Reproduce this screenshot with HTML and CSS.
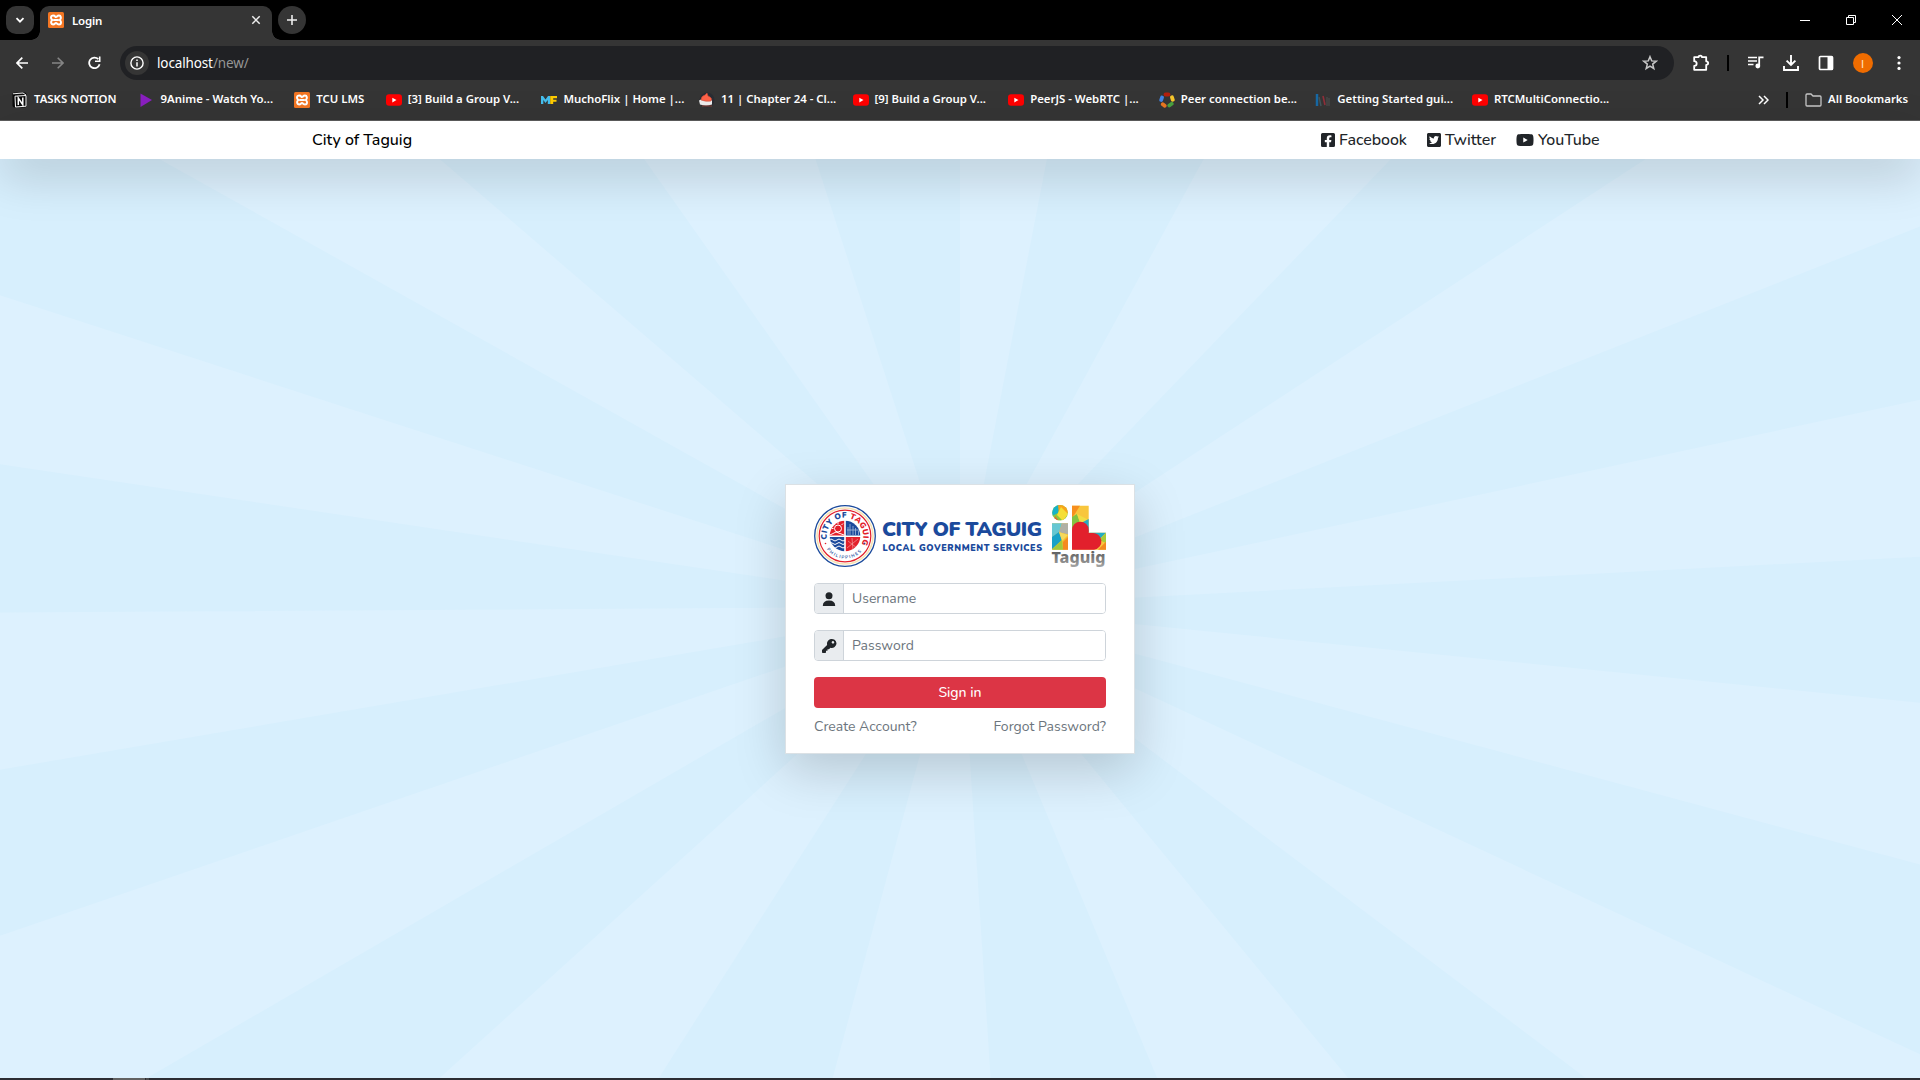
FILE: index.html
```
<!DOCTYPE html>
<html lang="en">
<head>
<meta charset="utf-8">
<title>Login</title>
<link rel="stylesheet" href="styles.css">
</head>
<body>
<svg class="defs" width="0" height="0" aria-hidden="true">
  <symbol id="xampp" viewBox="0 0 16 16"><rect width="16" height="16" rx="1.5" fill="#f37623"/><path d="M4.300 8C2.300 6.500 2.500 3.600 5 3.600S7 5 8 5s1-1.400 3-1.400 2.700 2.900.7 4.400c2 1.500 1.800 4.400-.7 4.400S9 11 8 11s-1 1.400-3 1.400S2.300 9.500 4.300 8ZM5.500 8h5" fill="none" stroke="#fff" stroke-width="2"/></symbol>
  <symbol id="yt" viewBox="0 0 16 16"><rect y="2.300" width="16" height="11.500" rx="3" fill="#f00"/><path d="M6.300 5.700v4.700L10.500 8Z" fill="#fff"/></symbol>
</svg>
<div class="browser">
  <header class="tabs">
    <button class="tab-search"><svg width="10" height="10" viewBox="0 0 10 10"><path d="m1.500 3.200 3.500 3.500 3.500-3.500" fill="none" stroke="#fff" stroke-width="1.800"/></svg></button>
    <div class="tab"><svg width="16" height="16"><use href="#xampp"/></svg><span class="tab-title">Login</span><svg width="10" height="10" viewBox="0 0 10 10"><path d="m1.300 1.300 7.400 7.400m0-7.400-7.400 7.400" stroke="#eee" stroke-width="1.500"/></svg></div>
    <button class="new-tab"><svg width="12" height="12" viewBox="0 0 12 12"><path d="M6 1v10M1 6h10" stroke="#eee" stroke-width="1.600"/></svg></button>
    <div class="window-controls">
      <svg width="10" height="10"><path d="M0 5.500h10" stroke="#fff"/></svg>
      <svg width="10" height="10"><path d="M.5 2.500h7v7h-7ZM2.500 2.500v-2h7v7h-2" fill="none" stroke="#fff"/></svg>
      <svg width="10" height="10"><path d="m0 0 10 10M10 0 0 10" stroke="#fff"/></svg>
    </div>
  </header>

  <div class="toolbar">
    <div class="nav-buttons">
      <svg width="12" height="12" viewBox="0 0 12 12"><path d="M12 6H1.200M6.300.7 1 6l5.300 5.300" fill="none" stroke="#fff" stroke-width="1.700"/></svg>
      <svg width="12" height="12" viewBox="0 0 12 12"><path d="M0 6h10.800M5.700.7 11 6l-5.300 5.300" fill="none" stroke="#858585" stroke-width="1.600"/></svg>
      <svg width="14" height="14" viewBox="0 0 14 14"><path d="M10.300 3.200A5.300 5.300 0 1 0 11.600 8.300" fill="none" stroke="#fff" stroke-width="1.800"/><path d="M12.500.6V6H7V4.400h3.900V.6Z" fill="#fff"/></svg>
    </div>
    <div class="omnibox">
      <span class="site-info"><svg width="14" height="14" viewBox="0 0 14 14"><circle cx="7" cy="7" r="6.100" fill="none" stroke="#fff" stroke-width="1.400"/><path d="M7 6.200v4.200M7 3.500v1.500" stroke="#fff" stroke-width="1.500"/></svg></span>
      <span class="url">localhost<span class="path">/new/</span></span>
      <svg class="star" width="16" height="16" viewBox="0 0 16 16"><path d="m8 1.700 1.700 4.200 4.500.3-3.500 2.900 1.100 4.400L8 11.100l-3.800 2.400 1.100-4.400L1.800 6.200l4.500-.3Z" fill="none" stroke="#c7c7c7" stroke-width="1.500"/></svg>
    </div>
    <div class="actions">
      <svg width="18" height="18" viewBox="0 0 18 18"><path d="M2.200 3.200H6.500C6.500 1 10 1 10 3.200H14.200V7.300C16.800 7.300 16.800 10.900 14.200 10.900V15.800H2.200V12C5.500 12 5.500 7.200 2.200 7.200Z" fill="none" stroke="#fff" stroke-width="1.800" stroke-linejoin="round"/></svg>
      <i class="rule"></i>
      <svg width="18" height="18" viewBox="0 0 18 18"><path d="M1 3.500h9M1 7h9M1 10.500h5.500" stroke="#fff" stroke-width="1.700"/><path d="M12.200 12.500V3.300H16.500" fill="none" stroke="#fff" stroke-width="1.800"/><circle cx="10.800" cy="12" r="2.400" fill="#fff"/></svg>
      <svg width="18" height="18" viewBox="0 0 18 18"><path d="M9 1v9M4.600 6.600 9 11l4.400-4.400M2 12v4h14v-4" fill="none" stroke="#fff" stroke-width="1.900"/></svg>
      <svg width="18" height="18" viewBox="0 0 18 18"><rect x="2.500" y="2.500" width="13" height="13" rx="1" fill="none" stroke="#fff" stroke-width="1.700"/><path d="M10.500 2.500h5v13h-5Z" fill="#fff"/></svg>
      <span class="avatar">I</span>
      <svg width="18" height="18" viewBox="0 0 18 18" fill="#fff"><circle cx="9" cy="3.600" r="1.600"/><circle cx="9" cy="9" r="1.600"/><circle cx="9" cy="14.400" r="1.600"/></svg>
    </div>
  </div>

  <nav class="bookmarks">
    <a class="bm w83"><svg width="16" height="16" viewBox="0 0 16 16"><rect x=".5" y=".5" width="14" height="15" rx="2" fill="#0a0a0a"/><path d="m1 1.800 10-.8 3 2" fill="none" stroke="#eee"/><path d="M3 4.200 14 3.500v10.700L3.500 15Z" fill="none" stroke="#fff"/><path d="M6.300 13V6l4.500 6.700V5.500" fill="none" stroke="#fff" stroke-width="1.500"/></svg><span>TASKS NOTION</span></a>
    <a class="bm w113"><svg width="16" height="16"><path d="M1.500 1.500 13 8 1.500 15Z" fill="#8a1fc0"/></svg><span>9Anime - Watch Yo...</span></a>
    <a class="bm w49"><svg width="16" height="16"><use href="#xampp"/></svg><span>TCU LMS</span></a>
    <a class="bm w113"><svg width="16" height="16"><use href="#yt"/></svg><span>[3] Build a Group V...</span></a>
    <a class="bm w115"><svg width="16" height="16" viewBox="0 0 16 16"><path d="M0 12V4h2l2.500 3.500L7 4h2v8H6.800V8L4.500 11 2.300 8v4Z" fill="#45bfee"/><path d="M9.200 12V4H16v2.300h-3.800v1.400h3.300v2.100h-3.300V12Z" fill="#fc0"/></svg><span>MuchoFlix | Home |...</span></a>
    <a class="bm w111"><svg width="16" height="16" viewBox="0 0 16 16"><circle cx="8" cy="8" r="7.500" fill="#2a2d34"/><path d="M0 8.500q6-4 13 0v4q-6 2-12 0Z" fill="#eee"/><path d="M2 8q0-4 4-5l2-2 1 3q5 2 3 5-5 1-10-1M3 14h10" fill="#ff6248" stroke="#c84b37" stroke-width=".6"/></svg><span>11 | Chapter 24 - Cl...</span></a>
    <a class="bm w113"><svg width="16" height="16"><use href="#yt"/></svg><span>[9] Build a Group V...</span></a>
    <a class="bm w108"><svg width="16" height="16"><use href="#yt"/></svg><span>PeerJS - WebRTC |...</span></a>
    <a class="bm w114"><svg width="16" height="16" viewBox="0 0 16 16" fill="none" stroke-width="3.800" stroke-linecap="round"><path d="m2.200 8 .8-2.500" stroke="#4285e8"/><path d="m13 5.300.8 2.500" stroke="#f7c62c"/><path d="m12.700 11.800-2.400 1.700" stroke="#4aa13f"/><path d="M5.700 13.800 3.800 12.300" stroke="#e87722"/><path d="M6.500 2.500h3" stroke="#b4200e"/></svg><span>Peer connection be...</span></a>
    <a class="bm w114"><svg width="16" height="16" viewBox="0 0 16 16"><path d="M2 2v12" stroke="#1769a5" stroke-width="2.500"/><path d="m4 5 2 9" stroke="#42555a" stroke-width="1.500"/><path d="m8 4 2 9" stroke="#922f3a" stroke-width="1.600"/><path d="M12 5v9m2-8v8" stroke="#535353"/></svg><span>Getting Started gui...</span></a>
    <a class="bm w114"><svg width="16" height="16"><use href="#yt"/></svg><span>RTCMultiConnectio...</span></a>
    <div class="bm-end">
      <svg width="11" height="10" viewBox="0 0 11 10"><path d="m1 1 4 4-4 4m5-8 4 4-4 4" fill="none" stroke="#fff" stroke-width="1.500"/></svg>
      <i class="rule"></i>
      <a class="bm w78"><svg width="17" height="16" viewBox="0 0 17 16"><path d="M1 3q0-1 1-1h4l2 2h7q1 0 1 1v8q0 1-1 1H2q-1 0-1-1Z" fill="none" stroke="#c7c7c7" stroke-width="1.300"/></svg><span>All Bookmarks</span></a>
    </div>
  </nav>
</div>

<nav class="site-nav">
  <a class="brand">City of Taguig</a>
  <div class="social">
    <a><svg width="14" height="16" viewBox="0 0 448 512"><path fill="currentColor" d="M400 32H48A48 48 0 0 0 0 80v352a48 48 0 0 0 48 48h137.250V327.690h-63V256h63v-54.640c0-62.150 37-96.480 93.670-96.480 27.140 0 55.520 4.840 55.520 4.840v61h-31.270c-30.810 0-40.420 19.120-40.420 38.730V256h68.780l-11 71.690h-57.780V480H400a48 48 0 0 0 48-48V80a48 48 0 0 0-48-48z"/></svg><span class="fb">Facebook</span></a>
    <a><svg width="14" height="16" viewBox="0 0 448 512"><path fill="currentColor" d="M400 32H48C21.500 32 0 53.500 0 80v352c0 26.500 21.500 48 48 48h352c26.500 0 48-21.500 48-48V80c0-26.500-21.500-48-48-48zm-48.900 158.800c.2 2.800.2 5.700.2 8.500 0 86.700-66 186.600-186.600 186.600-37.200 0-71.700-10.800-100.700-29.400 5.300.6 10.400.8 15.800.8 30.700 0 58.900-10.400 81.400-28-28.800-.6-53-19.500-61.300-45.500 10.100 1.500 19.200 1.500 29.600-1.200-30-6.100-52.500-32.500-52.500-64.400v-.8c8.700 4.900 18.900 7.900 29.600 8.300a65.447 65.447 0 0 1-29.200-54.600c0-12.200 3.200-23.400 8.900-33.100 32.300 39.800 80.800 65.800 135.200 68.600-9.300-44.500 24-80.600 64-80.600 18.900 0 35.900 7.900 47.900 20.700 14.800-2.800 29-8.300 41.600-15.800-4.900 15.200-15.200 28-28.800 36.100 13.200-1.400 26-5.100 37.800-10.200-8.900 13.100-20.100 24.700-32.900 34z"/></svg><span class="tw">Twitter</span></a>
    <a><svg width="18" height="16" viewBox="0 0 576 512"><path fill="currentColor" d="M549.655 124.083c-6.281-23.650-24.787-42.276-48.284-48.597C458.781 64 288 64 288 64S117.220 64 74.629 75.486c-23.497 6.322-42.003 24.947-48.284 48.597-11.412 42.867-11.412 132.305-11.412 132.305s0 89.438 11.412 132.305c6.281 23.650 24.787 41.500 48.284 47.821C117.220 448 288 448 288 448s170.780 0 213.371-11.486c23.497-6.321 42.003-24.171 48.284-47.821 11.412-42.867 11.412-132.305 11.412-132.305s0-89.438-11.412-132.305zm-317.510 213.508V175.185l142.739 81.205-142.739 81.201z"/></svg><span class="ytb">YouTube</span></a>
  </div>
</nav>

<main class="stage">
  <svg class="rays" viewBox="0 15 1568 1550" preserveAspectRatio="none" aria-hidden="true">
    <g fill="#ddf1fe">
      <path d="M784 770 130 15H359ZM784 770 526 15H666ZM784 770V15H855ZM784 770 983 15H1136Z"/>
      <path d="M784 770 1344 15H1568V129ZM784 770 1568 421V686ZM784 770 1568 932V1205ZM784 770 1568 1525V1565H1295Z"/>
      <path d="M784 770 1101 1565H945ZM784 770 809 1565H680ZM784 770 538 1565H359ZM784 770 120 1565H0V1325Z"/>
      <path d="M784 770 0 1045V780ZM784 770 0 530V245Z"/>
    </g>
  </svg>
  <form class="card">
    <svg class="logo" width="292" height="62" viewBox="0 0 292 62" role="img">
      <defs>
        <path id="arc-top" d="M14.600 39.200A18.300 18.300 0 1 1 47.400 39.200"/>
        <path id="arc-bottom" d="M9.900 39A22.500 22.500 0 0 0 52.100 39"/>
        <clipPath id="core"><circle cx="31" cy="31" r="15.300"/></clipPath>
        <clipPath id="dot"><circle cx="246" cy="7.800" r="7.800"/></clipPath>
        <linearGradient id="steel" x2="0" y2="1"><stop stop-color="#444"/><stop offset="1" stop-color="#aaa"/></linearGradient>
      </defs>
      <g fill="none"><circle cx="31" cy="31" r="30.300" fill="#fff" stroke="#1b4a9c" stroke-width="1.300"/><circle cx="31" cy="31" r="28" stroke="#f6e3b4" stroke-width="1.600"/><circle cx="31" cy="31" r="25.800" stroke="#e3202b" stroke-width="1.200"/></g>
      <text class="seal-top"><textPath href="#arc-top" startOffset="5"><tspan fill="#1b4a9c">CITY OF </tspan><tspan fill="#e3202b">TAGUIG</tspan></textPath></text>
      <text class="seal-bottom" fill="#3c65a9"><textPath href="#arc-bottom" startOffset="6">PHILIPPINES</textPath></text>
      <circle cx="11.500" cy="38.500" r=".8" fill="#e3202b"/><circle cx="50.500" cy="38.500" r=".8" fill="#1b4a9c"/>
      <g clip-path="url(#core)">
        <path d="M15 15h15.200v15.500H15ZM31.800 32H47v15H31.800Z" fill="#e3202b"/>
        <path d="M31.800 15H47v15.500H31.800ZM15 32h15.200v15H15Z" fill="#1b4a9c"/>
        <circle cx="24" cy="23.500" r="3.500" fill="none" stroke="#fff"/><path d="M24 17v2m-6.500 4.500h2m-.5-5 1.500 1.500m8.500-1.500-1.500 1.500M16 30l6-3 8 3" stroke="#fff" fill="none"/>
        <path d="M34 30v-8m2 8V19m3 11V21m2.500 9v-7m3 7v-4M33 25h13" stroke="#b8c8e3" stroke-width=".7"/>
        <path d="M15 35q2-2 4 0t4 0 4 0 4 0M15 38.500q2-2 4 0t4 0 4 0 4 0M15 42q2-2 4 0t4 0 4 0 4 0" fill="none" stroke="#fff"/>
        <path d="m33 43 11-9m-10 2 9 7m-5-10 1 12" stroke="#f49b9e" stroke-width=".7"/>
      </g>
      <text class="logo-title" x="68" y="31.300" textLength="160">CITY OF TAGUIG</text>
      <text class="logo-sub" x="68.500" y="46" textLength="159.500">LOCAL GOVERNMENT SERVICES</text>
      <g clip-path="url(#dot)"><path d="M238 0h16v16h-16Z" fill="#8dc63f"/><path d="m238 0 9 0-3 8-6 3Z" fill="#16b3c6"/><path d="M244 0h10v8l-9 2Z" fill="#f8a51b"/><path d="m247 2 7 7-5 7-6-6Z" fill="#f5de35"/><path d="m241 11 4 5h-5Z" fill="#e5662c"/></g>
      <path d="M238 18.300h16v26.400h-16Z" fill="#f5bd2c"/><path d="M238 18.300h10l-3 9-7 5Z" fill="#65c7d2"/><path d="m248 18.300 6 0v11l-9-2Z" fill="#b0b0a5"/><path d="m238 32 7-5 3 8-10 9Z" fill="#18a1c7"/><path d="m245 27 9 3-6 6Z" fill="#f5d85b"/><path d="m238 44.700 10-10 1 10Z" fill="#a4c83c"/><path d="m249 37 5-5v12.700h-5Z" fill="#f58a20"/>
      <path d="M258 .7h16.700v27H292v17h-34Z" fill="#f8c63d"/><path d="M258 .7h8l-5 8-3 4Z" fill="#f78f1e"/><path d="m258 12 5-3 3 9-8 7Z" fill="#83c341"/><path d="m263 9 11.700 6-8 4Z" fill="#f1dd45"/><path d="m267 18 7.700-4v13.700Z" fill="#28aac3"/><path d="m275 27.700 17 0-7 7Z" fill="#25adc1"/><path d="m285 35 7-7v10Z" fill="#a9cb38"/><path d="m284 44.700 8-8v8Z" fill="#f28a20"/>
      <path d="M258 44.700V25a8.300 8.300 0 0 1 16.700 0v3H278a8.300 8.300 0 0 1 2 16.700Z" fill="#e2202c"/>
      <text class="logo-taguig" x="237.500" y="58" textLength="54" lengthAdjust="spacingAndGlyphs" fill="url(#steel)">Taguig</text>
    </svg>
    <label class="field"><span class="addon"><svg width="14" height="14" viewBox="0 0 14 14" fill="#212529"><circle cx="7" cy="3.700" r="3.500"/><path d="M.8 14q0-5.500 6.200-5.500T13.200 14Z"/></svg></span><input type="text" placeholder="Username"></label>
    <label class="field"><span class="addon"><svg width="16" height="16" viewBox="0 0 16 16"><path fill="#212529" d="M15.500 5.200A4.800 4.800 0 0 1 9.400 9.800L8 11.200H6.500v1.500H5v1.500a.8.800 0 0 1-.8.800H1.800a.8.800 0 0 1-.8-.8v-2.100l5.100-5.100A4.800 4.800 0 1 1 15.500 5.200ZM11.900 3a1.300 1.300 0 1 0 .1 0Z"/></svg></span><input type="password" placeholder="Password"></label>
    <button class="signin" type="button">Sign in</button>
    <div class="links"><a>Create Account?</a><a>Forgot Password?</a></div>
  </form>
</main>
<footer class="taskbar"><i></i><b></b></footer>
</body>
</html>
```
FILE: styles.css
```
* { box-sizing: border-box; }
html, body { height: 100%; }
body {
  margin: 0;
  display: flex;
  flex-direction: column;
  overflow: hidden;
  font-family: Nunito, Lato, sans-serif;
  color: #212529;
}
button { border: 0; padding: 0; font-family: inherit; }
svg { flex: none; display: block; }
.defs { position: absolute; }

/* Browser window */
.browser {
  flex: none;
  height: 121px;
  background: #353535;
  border-bottom: 1px solid #5d5d5d;
  font-family: "Segoe UI", "Noto Sans", sans-serif;
  color: #fff;
}
.tabs {
  height: 40px;
  background: #000;
  display: flex;
  align-items: flex-start;
  padding: 6px 18px 0 6px;
}
.tab-search, .new-tab {
  width: 28px;
  height: 28px;
  border-radius: 10px;
  background: #353535;
  display: grid;
  place-items: center;
}
.new-tab { border-radius: 50%; margin-left: 6px; }
.tab {
  position: relative;
  width: 232px;
  height: 34px;
  margin-left: 6px;
  padding: 0 11px 6px 8px;
  border-radius: 9px 9px 0 0;
  background: #353535;
  display: flex;
  align-items: center;
}
.tab::before, .tab::after {
  content: "";
  position: absolute;
  bottom: 0;
  width: 9px;
  height: 9px;
}
.tab::before { left: -9px; background: radial-gradient(circle at 0 0, #000 8.500px, #353535 9px); }
.tab::after { right: -9px; background: radial-gradient(circle at 100% 0, #000 8.500px, #353535 9px); }
.tab-title { flex: 1; margin-left: 8px; font-size: 11.500px; font-weight: 600; letter-spacing: -0.200px; }
.window-controls { margin-left: auto; display: flex; gap: 36px; padding-top: 9px; }

.toolbar { height: 40px; display: flex; align-items: center; padding: 6px 12px 0 16px; }
.nav-buttons { width: 104px; display: flex; align-items: center; gap: 24px; }
.omnibox {
  flex: none;
  width: 1554px;
  height: 34px;
  border-radius: 17px;
  background: #202124;
  display: flex;
  align-items: center;
  padding: 0 16px 0 5px;
}
.site-info { width: 24px; height: 24px; border-radius: 50%; background: #353535; display: grid; place-items: center; }
.url { margin-left: 8px; font-size: 13.500px; letter-spacing: -0.130px; }
.path { color: #969696; }
.star { margin-left: auto; }
.actions { flex: 1; display: flex; align-items: center; padding-left: 18px; justify-content: space-between; }
.rule { width: 2px; height: 16px; background: #000; }
.avatar {
  width: 20px;
  height: 20px;
  border-radius: 50%;
  background: #ef6c00;
  display: grid;
  place-items: center;
  font: 11px Lato, sans-serif;
  color: #ffe0c2;
}

.bookmarks { height: 40px; display: flex; align-items: center; gap: 20.600px; padding: 0 14px 0 12px; }
.bm { display: flex; align-items: center; gap: 6px; flex: none; }
.bm span { font-size: 11.400px; font-weight: 600; white-space: nowrap; line-height: 16px; padding-bottom: 2px; }
.bm .w49 { letter-spacing: 0; }
.w49 span { width: 49px; }
.w78 span { width: 78px; }
.w83 span { width: 84px; }
.w108 span { width: 108px; }
.w111 span { width: 111px; }
.w113 span { width: 113px; }
.w114 span { width: 114px; }
.w115 span { width: 115px; }
.bm-end { margin-left: auto; display: flex; align-items: center; gap: 17px; }

/* Site navigation */
.site-nav {
  flex: none;
  position: relative;
  z-index: 1;
  height: 38px;
  padding: 0 320px 0 312px;
  display: flex;
  justify-content: space-between;
  align-items: center;
  background: #fff;
  box-shadow: 0 16px 48px rgba(0, 0, 0, .175);
  font-size: 16px;
  font-weight: 500;
}
.brand { color: #000; }
.social { display: flex; gap: 20px; }
.social a { display: flex; align-items: center; gap: 4px; }
.social span { letter-spacing: -0.050px; }
.fb { width: 68px; }
.tw { width: 51px; }
.ytb { width: 62px; }

/* Login page */
.stage {
  flex: 1;
  min-height: 0;
  display: grid;
  grid-template: 100% / 100%;
  place-items: center;
  background: #d7effd;
}
.rays { grid-area: 1 / 1; width: 100%; height: 100%; min-height: 0; }
.card {
  grid-area: 1 / 1;
  position: relative;
  width: 350px;
  height: 270px;
  margin-top: 1px;
  padding: 20px 28px;
  border: 1px solid #dbe1e5;
  background: #fff;
  box-shadow: 0 16px 48px rgba(0, 0, 0, .175);
  display: flex;
  flex-direction: column;
  gap: 16px;
  font-size: 14px;
}
.logo text { font-family: Nunito, Lato, sans-serif; font-weight: 900; }
.logo .seal-top { font-size: 8px; letter-spacing: .3px; }
.logo .seal-bottom { font-size: 4.500px; font-weight: 700; letter-spacing: 1.200px; }
.logo .logo-title { font-size: 20.500px; fill: #1b4a9c; }
.logo .logo-sub { font-size: 9px; fill: #1b4a9c; }
.logo .logo-taguig { font-family: "Noto Sans", sans-serif; font-size: 15.500px; font-weight: 800; }
.field {
  height: 31px;
  display: flex;
  flex: none;
  border: 1px solid #ced4da;
  border-radius: 4px;
  overflow: hidden;
}
.addon { width: 29px; background: #e9ecef; border-right: 1px solid #ced4da; display: grid; place-items: center; }
.field input {
  flex: 1;
  min-width: 0;
  border: 0;
  outline: 0;
  padding: 0 8px;
  font: 14px Nunito, Lato, sans-serif;
}
.field input::placeholder { color: #6c757d; }
.signin {
  flex: none;
  height: 31px;
  border-radius: 4px;
  background: #dc3545;
  color: #fff;
  font-size: 14px;
  font-weight: 500;
}
.links { display: flex; justify-content: space-between; margin-top: -7px; color: #6c757d; }

.taskbar { flex: none; height: 2px; background: #2c2d33; display: flex; padding-left: 113px; }
.taskbar i { width: 32px; background: #626262; }
.taskbar b { width: 3px; margin-left: 1px; background: #4a4a4c; }
```
